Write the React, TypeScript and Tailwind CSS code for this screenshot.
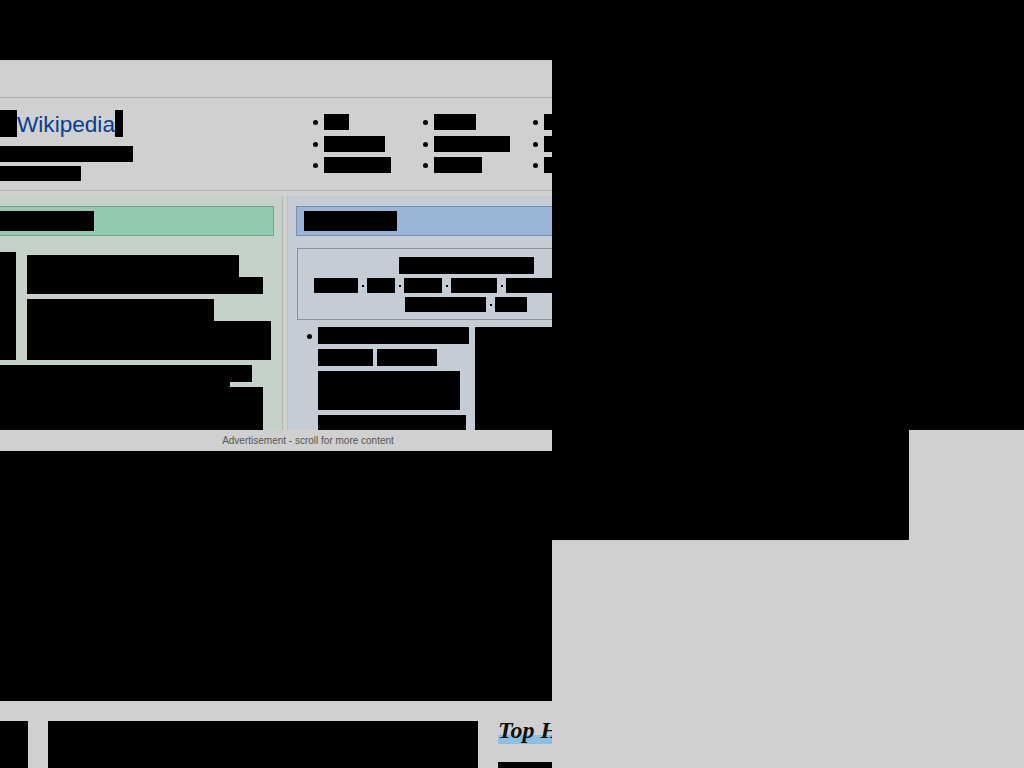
import React from 'react'

const Bar = ({ className }: { className: string }) => <div className={`bg-black ${className}`} />

const NavCol = ({ widths }: { widths: number[] }) => (
  <ul className="w-[110px] shrink-0 flex flex-col">
    {widths.map((w, i) => (
      <li key={i} className={`flex items-center h-[16px] ${i === 1 ? 'mt-[6px]' : i === 2 ? 'mt-[5px]' : ''}`}>
        <span className="ml-[2px] w-[5px] h-[5px] rounded-full bg-black shrink-0" />
        <span className="ml-[6px] h-[16px] bg-black shrink-0" style={{ width: w }} />
      </li>
    ))}
  </ul>
)

const Dot = () => <span className="w-[2px] h-[2px] bg-black ml-[4px] mr-[3px] shrink-0" />

export default function App() {
  return (
    <div className="w-[1024px] h-[768px] bg-black overflow-hidden flex flex-col font-['Liberation_Sans',Arial,sans-serif]">
      <div className="h-[60px] shrink-0" />
      <div className="flex flex-1">
        {/* left: page capture */}
        <div className="w-[552px] shrink-0 flex flex-col overflow-hidden bg-[#d0d0d0]">
          {/* toolbar */}
          <div className="h-[38px] shrink-0 border-b border-[#adadad]" />

          {/* header */}
          <div className="h-[93px] shrink-0 flex border-b border-[#b4b4b4]">
            <div className="w-[311px] shrink-0 pt-[12px] flex flex-col">
              <div className="flex items-stretch h-[27px]">
                <Bar className="w-[17px]" />
                <span className="text-[22.6px] leading-[27px] text-[#0b3c93] pt-[1px]">Wikipedia</span>
                <Bar className="w-[8px]" />
              </div>
              <Bar className="w-[133px] h-[16px] mt-[9px]" />
              <Bar className="w-[81px] h-[15px] mt-[4px]" />
            </div>
            <div className="flex pt-[16px]">
              <NavCol widths={[25, 61, 67]} />
              <NavCol widths={[42, 76, 48]} />
              <NavCol widths={[40, 40, 40]} />
            </div>
          </div>

          {/* content columns */}
          <div className="h-[239px] shrink-0 flex pt-[5px]">
            <div className="w-[283px] shrink-0 bg-[#c6d1ca] border-r border-[#aebab2] pt-[10px] pr-[8px] flex flex-col">
              <div className="h-[30px] bg-[#92cbb0] border border-l-0 border-[#72a48b] flex items-center">
                <Bar className="w-[94px] h-[20px]" />
              </div>
              <div className="mt-[16px] flex flex-col">
                <div className="flex">
                  <div className="w-[27px] shrink-0">
                    <Bar className="w-[16px] h-[108px]" />
                  </div>
                  <div className="flex flex-col pt-[3px]">
                    <Bar className="w-[212px] h-[22px]" />
                    <Bar className="w-[236px] h-[17px]" />
                    <Bar className="w-[187px] h-[22px] mt-[5px]" />
                    <Bar className="w-[244px] h-[39px]" />
                  </div>
                </div>
                <Bar className="w-[252px] h-[17px] mt-[5px]" />
                <Bar className="w-[230px] h-[5px]" />
                <Bar className="w-[263px] h-[43px]" />
              </div>
            </div>
            <div className="w-[5px] shrink-0 border-r border-[#bcc3c9]" />
            <div className="flex-1 bg-[#c5ccd3] pt-[10px] pl-[8px] flex flex-col min-w-0">
              <div className="h-[30px] w-[270px] bg-[#9bb5d6] border border-[#7890ab] flex items-center pl-[7px]">
                <Bar className="w-[93px] h-[20px]" />
              </div>
              <div className="mt-[12px] ml-[1px] h-[72px] w-[270px] border border-[#8b9198] flex flex-col items-start">
                <Bar className="w-[135px] h-[17px] ml-[101px] mt-[8px]" />
                <div className="flex items-center mt-[4px] ml-[16px] h-[15px]">
                  <Bar className="w-[44px] h-[15px] shrink-0" />
                  <Dot />
                  <Bar className="w-[28px] h-[15px] shrink-0" />
                  <Dot />
                  <Bar className="w-[38px] h-[15px] shrink-0" />
                  <Dot />
                  <Bar className="w-[46px] h-[15px] shrink-0" />
                  <Dot />
                  <Bar className="w-[60px] h-[15px] shrink-0" />
                </div>
                <div className="flex items-center mt-[4px] ml-[107px] h-[15px]">
                  <Bar className="w-[81px] h-[15px] shrink-0" />
                  <Dot />
                  <Bar className="w-[32px] h-[15px] shrink-0" />
                </div>
              </div>
              <div className="flex mt-[7px] flex-1">
                <div className="w-[22px] shrink-0 flex justify-center pt-[7px]">
                  <span className="w-[5px] h-[5px] rounded-full bg-black ml-[4px]" />
                </div>
                <div className="w-[157px] shrink-0 flex flex-col">
                  <Bar className="w-[151px] h-[17px]" />
                  <div className="flex gap-[4px] mt-[5px]">
                    <Bar className="w-[55px] h-[17px]" />
                    <Bar className="w-[60px] h-[17px]" />
                  </div>
                  <Bar className="w-[142px] h-[39px] mt-[5px]" />
                  <Bar className="w-[148px] flex-1 mt-[5px]" />
                </div>
                <Bar className="flex-1" />
              </div>
            </div>
          </div>

          {/* ad notice */}
          <div className="h-[21px] shrink-0 pl-[64px] text-center text-[10px] leading-[22px] text-[#555555]">
            Advertisement - scroll for more content
          </div>
          <Bar className="h-[250px] shrink-0" />
          <div className="h-[20px] shrink-0" />
          <div className="flex flex-1 items-start">
            <Bar className="w-[28px] h-[47px] shrink-0" />
            <Bar className="w-[430px] h-[47px] ml-[20px] shrink-0" />
            <div className="ml-[20px] flex flex-col shrink-0 w-[200px]">
              <h2 className="w-[170px] h-[26px] -mt-[3px] whitespace-nowrap font-['Liberation_Serif','Times_New_Roman',serif] font-bold italic text-[24px] leading-[24px] text-[#111111] bg-[linear-gradient(transparent_64%,#8dbfe0_64%)]">
                Top Headlines
              </h2>
              <Bar className="w-[140px] h-[10px] mt-[18px]" />
            </div>
          </div>
        </div>

        {/* right side */}
        <div className="flex-1 flex flex-col">
          <div className="h-[370px] shrink-0" />
          <div className="h-[110px] shrink-0 flex">
            <div className="w-[357px] shrink-0" />
            <div className="flex-1 bg-[#d0d0d0]" />
          </div>
          <div className="flex-1 bg-[#d0d0d0]" />
        </div>
      </div>
    </div>
  )
}
